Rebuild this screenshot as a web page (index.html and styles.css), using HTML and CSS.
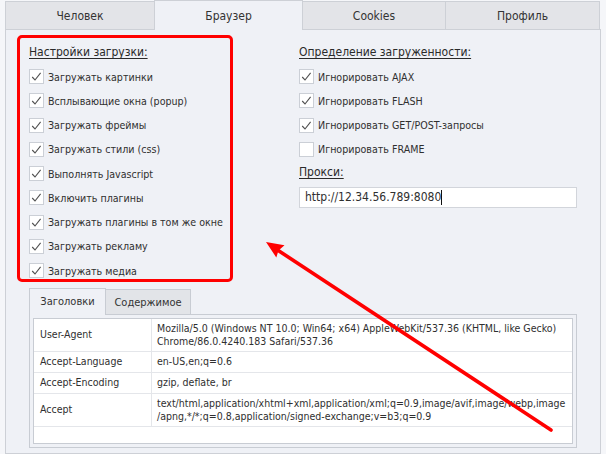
FILE: index.html
```html
<!DOCTYPE html>
<html lang="ru">
<head>
<meta charset="utf-8">
<title>Браузер</title>
<link rel="stylesheet" href="styles.css">
</head>
<body>
<div class="app">
  <div class="tabs">
    <div class="tab t1">Человек</div>
    <div class="tab t2 active">Браузер</div>
    <div class="tab t3">Cookies</div>
    <div class="tab t4">Профиль</div>
  </div>
  <div class="panel">
    <div class="columns">
      <section class="group highlight">
        <div class="heading">Настройки загрузки:</div>
        <ul class="checks">
          <li class="check"><span class="box"><svg viewBox="0 0 13 13"><path d="M2.2 7 L5 10 L10.6 2.8"/></svg></span>Загружать картинки</li>
          <li class="check"><span class="box"><svg viewBox="0 0 13 13"><path d="M2.2 7 L5 10 L10.6 2.8"/></svg></span>Всплывающие окна (popup)</li>
          <li class="check"><span class="box"><svg viewBox="0 0 13 13"><path d="M2.2 7 L5 10 L10.6 2.8"/></svg></span>Загружать фреймы</li>
          <li class="check"><span class="box"><svg viewBox="0 0 13 13"><path d="M2.2 7 L5 10 L10.6 2.8"/></svg></span>Загружать стили (css)</li>
          <li class="check"><span class="box"><svg viewBox="0 0 13 13"><path d="M2.2 7 L5 10 L10.6 2.8"/></svg></span>Выполнять Javascript</li>
          <li class="check"><span class="box"><svg viewBox="0 0 13 13"><path d="M2.2 7 L5 10 L10.6 2.8"/></svg></span>Включить плагины</li>
          <li class="check"><span class="box"><svg viewBox="0 0 13 13"><path d="M2.2 7 L5 10 L10.6 2.8"/></svg></span>Загружать плагины в том же окне</li>
          <li class="check"><span class="box"><svg viewBox="0 0 13 13"><path d="M2.2 7 L5 10 L10.6 2.8"/></svg></span>Загружать рекламу</li>
          <li class="check"><span class="box"><svg viewBox="0 0 13 13"><path d="M2.2 7 L5 10 L10.6 2.8"/></svg></span>Загружать медиа</li>
        </ul>
      </section>
      <section class="group right">
        <div class="heading">Определение загруженности:</div>
        <ul class="checks">
          <li class="check"><span class="box"><svg viewBox="0 0 13 13"><path d="M2.2 7 L5 10 L10.6 2.8"/></svg></span>Игнорировать AJAX</li>
          <li class="check"><span class="box"><svg viewBox="0 0 13 13"><path d="M2.2 7 L5 10 L10.6 2.8"/></svg></span>Игнорировать FLASH</li>
          <li class="check"><span class="box"><svg viewBox="0 0 13 13"><path d="M2.2 7 L5 10 L10.6 2.8"/></svg></span>Игнорировать GET/POST-запросы</li>
          <li class="check"><span class="box"></span>Игнорировать FRAME</li>
        </ul>
        <div class="heading proxy-label">Прокси:</div>
        <div class="input">http://12.34.56.789:8080<span class="caret"></span></div>
      </section>
    </div>

    <div class="subtabs">
      <div class="subtab active">Заголовки</div>
      <div class="subtab">Содержимое</div>
    </div>
    <div class="frame">
      <div class="kv">
        <div class="k">User-Agent</div>
        <div class="v">Mozilla/5.0 (Windows NT 10.0; Win64; x64) AppleWebKit/537.36 (KHTML, like Gecko)<br>Chrome/86.0.4240.183 Safari/537.36</div>
        <div class="k">Accept-Language</div>
        <div class="v">en-US,en;q=0.6</div>
        <div class="k">Accept-Encoding</div>
        <div class="v">gzip, deflate, br</div>
        <div class="k">Accept</div>
        <div class="v">text/html,application/xhtml+xml,application/xml;q=0.9,image/avif,image/webp,image<br>/apng,*/*;q=0.8,application/signed-exchange;v=b3;q=0.9</div>
      </div>
    </div>
  </div>

  <svg class="arrow" viewBox="0 0 606 454" width="606" height="454">
    <line x1="551" y1="430" x2="276" y2="249" />
    <polygon points="266,242 284.5,245.3 278.5,250.5 276.3,257.5" />
  </svg>
</div>
</body>
</html>
```

FILE: styles.css
```css
* {
  box-sizing: border-box;
  margin: 0;
  padding: 0;
}

html, body {
  width: 606px;
  height: 454px;
  overflow: hidden;
}

body {
  background: #f5f6f9;
  font-family: "DejaVu Sans Condensed", "DejaVu Sans", sans-serif;
  font-stretch: condensed;
  color: #2f2f2f;
}

.app {
  position: relative;
  width: 606px;
  height: 454px;
  padding-left: 5px;
}

/* top tabs */
.tabs {
  display: flex;
  align-items: flex-end;
  height: 29px;
}

.tab {
  height: 28px;
  border: 1px solid #cdd0d6;
  border-bottom: none;
  background: #e3e4e8;
  font-size: 12px;
  color: #333;
  display: flex;
  align-items: center;
  justify-content: center;
  margin-left: -1px;
  padding-top: 1px;
}

.tab.t1 { width: 150px; margin-left: 0; }
.tab.t2 { width: 149px; }
.tab.t3 { width: 144px; }
.tab.t4 { width: 155px; }

.tab.active {
  height: 30px;
  margin-bottom: -1px;
  background: #eff1f6;
  position: relative;
  z-index: 1;
  padding-top: 0;
}

/* main panel */
.panel {
  width: 596px;
  height: 425px;
  border: 1px solid #cdd0d6;
  background: #eff1f6;
  padding: 5px 22px 0 11px;
}

.columns {
  display: flex;
  align-items: flex-start;
  gap: 66px;
}

.highlight {
  width: 216px;
  border: 3px solid #ff0000;
  border-radius: 5px;
  padding: 6px 0 1px 9px;
}

.right {
  width: 278px;
  padding-top: 9px;
}

.heading {
  font-size: 12px;
  line-height: 16px;
  height: 16px;
  text-decoration: underline;
  text-underline-offset: 2px;
  color: #2a2a2a;
  margin-bottom: 9px;
}

.checks {
  list-style: none;
  display: flex;
  flex-direction: column;
  gap: 9.25px;
}

.check {
  display: flex;
  align-items: center;
  gap: 4px;
  height: 15px;
  font-size: 10.6px;
  white-space: nowrap;
  color: #2f2f2f;
}

.box {
  width: 15px;
  height: 15px;
  flex: none;
  border: 1px solid #cbcfd6;
  background: #fff;
}

.box svg {
  display: block;
  width: 13px;
  height: 13px;
}

.box path {
  fill: none;
  stroke: #505050;
  stroke-width: 1.1;
}

.proxy-label {
  margin-top: 7.25px;
  margin-bottom: 7px;
}

.input {
  height: 21px;
  border: 1px solid #d2d5db;
  background: #fff;
  font-size: 12px;
  line-height: 19px;
  padding-left: 5px;
  color: #2f2f2f;
  display: flex;
  align-items: center;
}

.caret {
  display: inline-block;
  width: 1px;
  height: 15px;
  background: #111;
}

/* bottom headers block */
.subtabs {
  display: flex;
  align-items: flex-end;
  height: 26px;
  margin: 6px 0 0 12px;
}

.subtab {
  height: 25px;
  width: 86px;
  margin-left: -1px;
  border: 1px solid #c8ccd3;
  border-bottom: none;
  background: #e2e4e8;
  font-size: 11px;
  display: flex;
  align-items: center;
  justify-content: center;
  color: #333;
}

.subtab.active {
  width: 77px;
  height: 27px;
  margin-left: 0;
  margin-bottom: -1px;
  background: #eff1f6;
  position: relative;
  z-index: 1;
  padding-bottom: 1px;
}

.frame {
  width: 548px;
  height: 134px;
  margin-left: 12px;
  border: 1px solid #c8ccd3;
  padding: 3px;
}

.kv {
  height: 126px;
  border: 1px solid #c8ccd3;
  background: #fff;
  display: grid;
  grid-template-columns: 118px 1fr;
  grid-template-rows: 33px 21px 21px 33px;
  align-content: start;
  font-size: 10.5px;
  line-height: 13px;
  color: #2f2f2f;
}

.k, .v {
  display: flex;
  align-items: center;
  border-bottom: 1px solid #e4e6ea;
  white-space: nowrap;
  padding-bottom: 1px;
}

.k {
  border-right: 1px solid #e4e6ea;
  padding-left: 6px;
}

.v {
  padding-left: 5px;
}

/* annotation arrow */
.arrow {
  position: absolute;
  top: 0;
  left: 0;
  z-index: 5;
  pointer-events: none;
}

.arrow line {
  stroke: #ff0000;
  stroke-width: 3.6;
  stroke-linecap: round;
}

.arrow polygon {
  fill: #ff0000;
}
```
